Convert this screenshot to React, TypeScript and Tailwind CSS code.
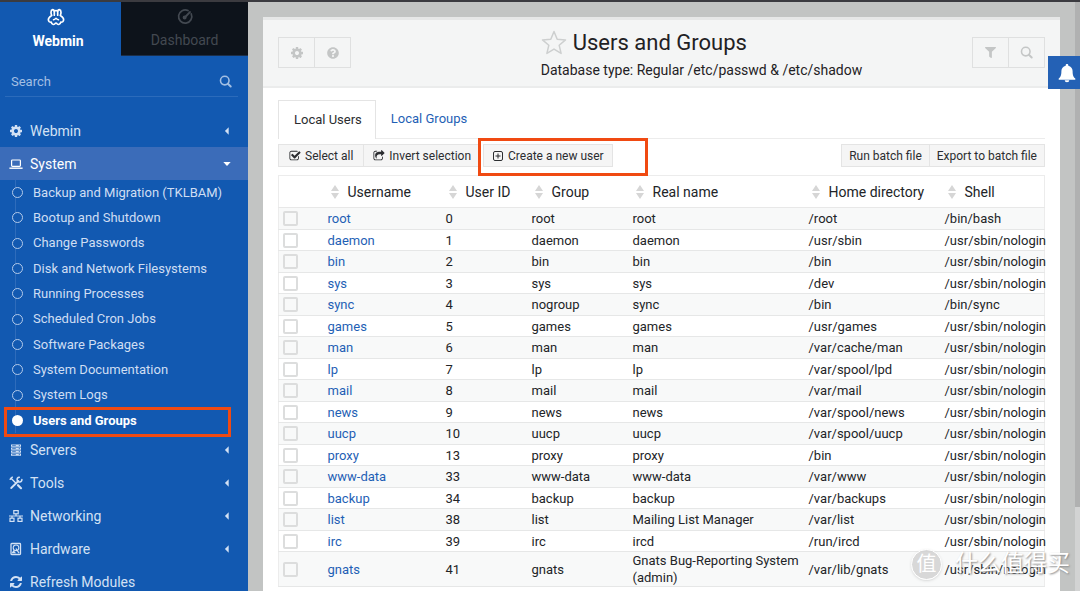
import React, { useState } from 'react';
import { FaFilter, FaQuestionCircle } from 'react-icons/fa';

type IconProps = { className?: string };

const modules = [
  'Backup and Migration (TKLBAM)',
  'Bootup and Shutdown',
  'Change Passwords',
  'Disk and Network Filesystems',
  'Running Processes',
  'Scheduled Cron Jobs',
  'Software Packages',
  'System Documentation',
  'System Logs',
  'Users and Groups',
];

const columns = ['Username', 'User ID', 'Group', 'Real name', 'Home directory', 'Shell'];

const users = [
  { name: 'root', id: 0, group: 'root', real: 'root', home: '/root', shell: '/bin/bash' },
  { name: 'daemon', id: 1, group: 'daemon', real: 'daemon', home: '/usr/sbin', shell: '/usr/sbin/nologin' },
  { name: 'bin', id: 2, group: 'bin', real: 'bin', home: '/bin', shell: '/usr/sbin/nologin' },
  { name: 'sys', id: 3, group: 'sys', real: 'sys', home: '/dev', shell: '/usr/sbin/nologin' },
  { name: 'sync', id: 4, group: 'nogroup', real: 'sync', home: '/bin', shell: '/bin/sync' },
  { name: 'games', id: 5, group: 'games', real: 'games', home: '/usr/games', shell: '/usr/sbin/nologin' },
  { name: 'man', id: 6, group: 'man', real: 'man', home: '/var/cache/man', shell: '/usr/sbin/nologin' },
  { name: 'lp', id: 7, group: 'lp', real: 'lp', home: '/var/spool/lpd', shell: '/usr/sbin/nologin' },
  { name: 'mail', id: 8, group: 'mail', real: 'mail', home: '/var/mail', shell: '/usr/sbin/nologin' },
  { name: 'news', id: 9, group: 'news', real: 'news', home: '/var/spool/news', shell: '/usr/sbin/nologin' },
  { name: 'uucp', id: 10, group: 'uucp', real: 'uucp', home: '/var/spool/uucp', shell: '/usr/sbin/nologin' },
  { name: 'proxy', id: 13, group: 'proxy', real: 'proxy', home: '/bin', shell: '/usr/sbin/nologin' },
  { name: 'www-data', id: 33, group: 'www-data', real: 'www-data', home: '/var/www', shell: '/usr/sbin/nologin' },
  { name: 'backup', id: 34, group: 'backup', real: 'backup', home: '/var/backups', shell: '/usr/sbin/nologin' },
  { name: 'list', id: 38, group: 'list', real: 'Mailing List Manager', home: '/var/list', shell: '/usr/sbin/nologin' },
  { name: 'irc', id: 39, group: 'irc', real: 'ircd', home: '/run/ircd', shell: '/usr/sbin/nologin' },
  { name: 'gnats', id: 41, group: 'gnats', real: 'Gnats Bug-Reporting System (admin)', home: '/var/lib/gnats', shell: '/usr/sbin/nologin' },
];

function CogIcon({ className }: IconProps) {
  return (
    <svg viewBox="0 0 1792 1792" fill="currentColor" className={className}>
      <path d="M1152 896q0-106-75-181t-181-75-181 75-75 181 75 181 181 75 181-75 75-181zm512-109v222q0 12-8 23t-20 13l-185 28q-19 54-39 91 35 50 107 138 10 12 10 25t-9 23q-27 37-99 108t-94 71q-12 0-26-9l-138-108q-44 23-91 38-16 136-29 186-7 28-36 28h-222q-14 0-24.5-8.5t-11.5-21.5l-28-184q-49-16-90-37l-141 107q-10 9-25 9-14 0-25-11-126-114-165-168-7-10-7-23 0-12 8-23 15-21 51-66.5t54-70.5q-27-50-41-99l-183-27q-13-2-21-12.5t-8-23.5v-222q0-12 8-23t19-13l186-28q14-46 39-92-40-57-107-138-10-12-10-24 0-10 9-23 26-36 98.5-107.5t94.5-71.5q13 0 26 10l138 107q44-23 91-38 16-136 29-186 7-28 36-28h222q14 0 24.5 8.5t11.5 21.5l28 184q49 16 90 37l142-107q9-9 24-9 13 0 25 10 129 119 165 170 7 8 7 22 0 12-8 23-15 21-51 66.5t-54 70.5q26 50 41 98l183 28q13 2 21 12.5t8 23.5z" />
    </svg>
  );
}

function RefreshIcon({ className }: IconProps) {
  return (
    <svg viewBox="0 0 1792 1792" fill="currentColor" className={className}>
      <path d="M1639 1056q0 5-1 7-64 268-268 434.5t-478 166.5q-146 0-282.5-55t-243.5-157l-129 129q-19 19-45 19t-45-19-19-45v-448q0-26 19-45t45-19h448q26 0 45 19t19 45-19 45l-137 137q71 66 161 102t187 36q134 0 250-65t186-179q11-17 53-117 8-23 30-23h192q13 0 22.5 9.5t9.5 22.5zm25-800v448q0 26-19 45t-45 19h-448q-26 0-45-19t-19-45 19-45l138-138q-148-137-349-137-134 0-250 65t-186 179q-11 17-53 117-8 23-30 23h-199q-13 0-22.5-9.5t-9.5-22.5v-7q65-268 270-434.5t480-166.5q146 0 284 55.5t245 156.5l130-129q19-19 45-19t45 19 19 45z" />
    </svg>
  );
}

function CheckSquareIcon({ className }: IconProps) {
  return (
    <svg viewBox="0 0 1792 1792" fill="currentColor" className={className}>
      <path d="M1472 930v318q0 119-84.5 203.5t-203.5 84.5h-832q-119 0-203.5-84.5t-84.5-203.5v-832q0-119 84.5-203.5t203.5-84.5h832q63 0 117 25 15 7 18 23 3 17-9 29l-49 49q-10 10-23 10-3 0-9-2-23-6-45-6h-832q-66 0-113 47t-47 113v832q0 66 47 113t113 47h832q66 0 113-47t47-113v-254q0-13 9-22l64-64q10-10 23-10 6 0 12 3 20 8 20 29zm231-489l-814 814q-24 24-57 24t-57-24l-430-430q-24-24-24-57t24-57l110-110q24-24 57-24t57 24l263 263 647-647q24-24 57-24t57 24l110 110q24 24 24 57t-24 57z" />
    </svg>
  );
}

function InvertIcon({ className }: IconProps) {
  return (
    <svg viewBox="0 0 1792 1792" fill="currentColor" className={className}>
      <path d="M1472 989v259q0 119-84.5 203.5t-203.5 84.5h-832q-119 0-203.5-84.5t-84.5-203.5v-832q0-119 84.5-203.5t203.5-84.5h255q13 0 22.5 9.5t9.5 22.5q0 27-26 32-77 26-133 60-10 4-16 4h-112q-66 0-113 47t-47 113v832q0 66 47 113t113 47h832q66 0 113-47t47-113v-214q0-19 18-29 28-13 54-37 16-16 35-8 21 9 21 31zm237-496l-384 384q-18 19-45 19-12 0-25-5-39-17-39-59v-192h-160q-323 0-438 131-119 137-74 473 3 23-20 34-8 2-12 2-16 0-26-13-10-14-21-31t-39.5-68.5-49.5-99.5-38.5-114-17.5-122q0-49 3.5-91t14-90 28-88 47-81.5 68.5-74 94.5-61.5 124.5-48.5 159.5-30.5 196.5-11h160v-192q0-42 39-59 13-5 25-5 26 0 45 19l384 384q19 19 19 45t-19 45z" />
    </svg>
  );
}

function PlusSquareIcon({ className }: IconProps) {
  return (
    <svg viewBox="0 0 12 12" fill="none" stroke="currentColor" className={className}>
      <rect x="1.5" y="1.5" width="9" height="9" rx="1.5" />
      <path d="M6 3.5v5M3.5 6h5" />
    </svg>
  );
}

function SearchIcon({ className }: IconProps) {
  return (
    <svg viewBox="0 0 14 14" fill="none" stroke="currentColor" strokeWidth="1.7" className={className}>
      <circle cx="6.2" cy="6" r="4.6" />
      <path d="M9.6 9.4l3 3" strokeWidth="2.1" strokeLinecap="round" />
    </svg>
  );
}

function LaptopIcon({ className }: IconProps) {
  return (
    <svg viewBox="0 0 14 14" fill="none" stroke="currentColor" className={className}>
      <rect x="2.6" y="3" width="8.8" height="6.4" rx="0.8" strokeWidth="1.2" />
      <path d="M0.4 11.2h13.2" strokeWidth="1.4" />
    </svg>
  );
}

function ServersIcon({ className }: IconProps) {
  return (
    <svg viewBox="0 0 14 14" fill="none" className={className}>
      <path d="M2 2.6h10M2 5.6h10M2 8.6h10M2 11.6h10" stroke="currentColor" strokeWidth="2.2" />
      <path d="M3.2 2.6h3.6M3.2 5.6h3.6M3.2 8.6h3.6M3.2 11.6h3.6" stroke="#1259b1" strokeWidth="0.7" />
      <path d="M9.8 2.6h1M9.8 5.6h1M9.8 8.6h1M9.8 11.6h1" stroke="#1259b1" strokeWidth="0.9" />
    </svg>
  );
}

function ToolsIcon({ className }: IconProps) {
  return (
    <svg viewBox="0 0 14 14" fill="none" stroke="currentColor" strokeLinecap="round" className={className}>
      <path d="M2.2 12L9.4 5" strokeWidth="1.8" />
      <path d="M12.900 3.500a2.400 2.400 0 1 1-2.600-2.300" strokeWidth="1.500" />
      <path d="M2 2.200l5 5" strokeWidth="1.300" />
      <path d="M1.200 3.200l2-2" strokeWidth="1.600" />
      <path d="M9 9.200l3 3" strokeWidth="2.200" />
    </svg>
  );
}

function NetworkIcon({ className }: IconProps) {
  return (
    <svg viewBox="0 0 14 14" fill="none" stroke="currentColor" strokeWidth="1.2" className={className}>
      <rect x="4.8" y="1.6" width="4.4" height="3.2" />
      <rect x="1" y="9.2" width="4" height="3.2" />
      <rect x="9" y="9.2" width="4" height="3.2" />
      <path d="M7 4.8v2.2M0 7h14M3 7v2M11 7v2" />
    </svg>
  );
}

function DiskIcon({ className }: IconProps) {
  return (
    <svg viewBox="0 0 14 14" fill="none" stroke="currentColor" className={className}>
      <rect x="2" y="1.500" width="9.500" height="11" rx="0.800" strokeWidth="1.300" />
      <circle cx="7" cy="5.800" r="2.800" strokeWidth="1.100" />
      <path d="M2.500 11.300h4.500L4.600 8z" fill="currentColor" stroke="none" />
      <path d="M7 6.500l3 4.600" strokeWidth="1.300" />
    </svg>
  );
}

function BellIcon({ className }: IconProps) {
  return (
    <svg viewBox="0 0 18 20" fill="currentColor" className={className}>
      <path d="M9 1c-.8 0-1.3.5-1.3 1.2v.5C5 3.3 3.4 5.500 3.400 8c0 4.500-1 6.200-2.700 7.500v1.200h16.600v-1.200c-1.700-1.300-2.700-3-2.700-7.500 0-2.500-1.600-4.700-4.300-5.300v-.5C10.300 1.500 9.800 1 9 1zM6.700 17.200a2.300 2.100 0 0 0 4.600 0z" />
    </svg>
  );
}

function StarIcon({ className }: IconProps) {
  return (
    <svg viewBox="0 0 26 26" fill="none" stroke="currentColor" strokeWidth="1.5" strokeLinejoin="round" className={className}>
      <path d="M13 1.500l3.200 7.700 8.300.7-6.300 5.400 1.900 8.100L13 19.100l-7.100 4.300 1.900-8.100L1.500 9.900l8.300-.7z" />
    </svg>
  );
}

function WebminLogo({ className }: IconProps) {
  return (
    <svg viewBox="0 0 18 18" fill="none" stroke="currentColor" strokeWidth="1.7" strokeLinejoin="round" strokeLinecap="round" className={className}>
      <path d="M7.300 7.200V3.400Q7 1.700 5.700 1.700 4 2 4 4.200q0 2 .7 3.200Q2.500 8.600 1.700 10.400q-.8 2 .5 3.200 1 .8 2 .6.300 2 2 2.300 1 0 1.700-.8.500-.6 1.100-.6t1.100.6q.7.800 1.700.8 1.700-.3 2-2.300 1 .2 2-.6 1.300-1.200.5-3.200-.8-1.800-3-3Q14 6.200 14 4.200q0-2.200-1.700-2.500-1.300 0-1.600 1.700v3.800" />
      <path d="M7.300 3.400Q9 1.400 10.700 3.400M6.500 11.800Q7.500 11.600 9 10.200q1.500 1.400 2.500 1.600" strokeWidth="1.500" />
    </svg>
  );
}

function GaugeIcon({ className }: IconProps) {
  return (
    <svg viewBox="0 0 18 18" fill="none" stroke="currentColor" strokeWidth="1.800" strokeLinecap="round" className={className}>
      <path d="M15.600 6.200A7 7 0 1 1 12.200 2.700" />
      <path d="M9 9.800L14.200 4.300" strokeWidth="2" />
      <circle cx="8.600" cy="10" r="1.200" fill="currentColor" />
    </svg>
  );
}

function SortIcon() {
  return (
    <svg viewBox="0 0 8 14" className="h-[14px] w-2 shrink-0 fill-[#d6d6d6]">
      <path d="M4 0l4 6H0zM4 14l4-6H0z" />
    </svg>
  );
}

function Caret({ open }: { open?: boolean }) {
  return (
    <svg viewBox="0 0 8 8" className="h-2 w-2 fill-current">
      {open ? <path d="M0.300 2h7.400L4 6z" /> : <path d="M5.700 0.300v7.400L1.900 4z" />}
    </svg>
  );
}

function MenuItem({ icon, label, open, plain }: { icon: React.ReactNode; label: string; open?: boolean; plain?: boolean }) {
  return (
    <button
      type="button"
      className={
        open
          ? 'flex h-[33px] w-full shrink-0 items-center gap-[7px] bg-[#3b6cb9] pr-[17px] pl-[9px] text-left text-sm text-white'
          : 'flex h-[33px] w-full shrink-0 items-center gap-[7px] pr-[17px] pl-[9px] text-left text-sm text-[#d3e1f4]'
      }
    >
      {icon}
      <span className="flex-1">{label}</span>
      {!plain && <Caret open={open} />}
    </button>
  );
}

function Sidebar() {
  return (
    <aside className="flex w-[248px] shrink-0 flex-col bg-[#1259b1]">
      <div className="flex h-[54px] shrink-0">
        <button type="button" className="flex w-[121px] flex-col items-center pt-[6px] pr-[9px] text-sm font-bold text-white">
          <WebminLogo className="h-[18px] w-[18px]" />
          <span className="pl-1 leading-[30px]">Webmin</span>
        </button>
        <button type="button" className="flex flex-1 flex-col items-center border-b border-[#1c2f4a] bg-[#0d131b] pt-[6px] text-sm text-[#434951]">
          <GaugeIcon className="h-[18px] w-[18px]" />
          <span className="leading-[30px]">Dashboard</span>
        </button>
      </div>

      <div className="mr-[10px] mb-[17px] ml-[5px] mt-[11px] flex h-[30px] shrink-0 items-center border-b border-[#2b6bbb] px-[6px] text-[#a3bfe3]">
        <input
          type="search"
          aria-label="Search"
          placeholder="Search"
          className="min-w-0 flex-1 bg-transparent text-[13px] outline-none placeholder:text-[#a3bfe3]"
        />
        <SearchIcon className="h-[13px] w-[13px]" />
      </div>

      <nav className="flex flex-col">
        <MenuItem icon={<CogIcon className="h-[14px] w-[14px]" />} label="Webmin" />
        <MenuItem icon={<LaptopIcon className="h-[14px] w-[14px]" />} label="System" open />
        <ul className="relative grid h-[253px] shrink-0 auto-rows-fr text-[13px] text-[#cfdef3]">
          <li aria-hidden="true" className="absolute top-0 bottom-0 left-[15px] w-px bg-[#2f6cbb]" />
          {modules.map((name) => {
            const active = name === 'Users and Groups';
            return (
              <li key={name} className="relative flex items-center pl-3">
                <a href="#" className={active ? 'flex items-center gap-[10px] font-bold text-white' : 'flex items-center gap-[10px]'}>
                  <span
                    className={
                      active
                        ? 'h-[11px] w-[11px] rounded-full bg-white'
                        : 'h-[11px] w-[11px] rounded-full border border-[#b4cbea] bg-[#1259b1]'
                    }
                  />
                  {name}
                </a>
                {active && <span className="absolute -top-px right-[17px] -bottom-1 left-1 border-3 border-[#f04a12]" />}
              </li>
            );
          })}
        </ul>
        <MenuItem icon={<ServersIcon className="h-[14px] w-[14px]" />} label="Servers" />
        <MenuItem icon={<ToolsIcon className="h-[14px] w-[14px]" />} label="Tools" />
        <MenuItem icon={<NetworkIcon className="h-[14px] w-[14px]" />} label="Networking" />
        <MenuItem icon={<DiskIcon className="h-[14px] w-[14px]" />} label="Hardware" />
        <MenuItem icon={<RefreshIcon className="h-[14px] w-[14px]" />} label="Refresh Modules" plain />
      </nav>
    </aside>
  );
}

function PanelHeader() {
  return (
    <header className="flex h-[71px] items-start justify-between border-t-3 border-b-2 border-t-[#e6e7e7] border-b-[#ebecec] bg-[#f4f5f5] px-[15px] text-[#c4c6c6]">
      <div className="mt-[17px] flex h-[31px] border border-[#dfe0e0]">
        <button type="button" aria-label="Module config" className="flex w-9 items-center justify-center border-r border-[#dfe0e0]">
          <CogIcon className="h-[14px] w-[14px]" />
        </button>
        <button type="button" aria-label="Help" className="flex w-[35px] items-center justify-center">
          <FaQuestionCircle className="h-3 w-3" />
        </button>
      </div>
      <div className="mt-2 ml-20 flex flex-col text-[#1f2124]">
        <div className="flex items-center gap-[6px]">
          <StarIcon className="h-[26px] w-[26px] text-[#cdcfcf]" />
          <h1 className="text-[22px] leading-[30px]">Users and Groups</h1>
        </div>
        <p className="text-sm leading-6">Database type: Regular /etc/passwd &amp; /etc/shadow</p>
      </div>
      <div className="mt-[17px] flex h-[31px] border border-[#dfe0e0]">
        <button type="button" aria-label="Filter" className="flex w-9 items-center justify-center border-r border-[#dfe0e0]">
          <FaFilter className="h-[11px] w-[11px]" />
        </button>
        <button type="button" aria-label="Search users" className="flex w-[35px] items-center justify-center">
          <SearchIcon className="h-[13px] w-[13px]" />
        </button>
      </div>
    </header>
  );
}

function Toolbar() {
  return (
    <div className="mt-[5px] flex h-[23px] items-stretch justify-between text-xs text-[#2b2d30]">
      <div className="flex">
        <button type="button" className="flex items-center gap-1 border border-[#e4e4e4] bg-[#f5f5f5] px-[10px]">
          <CheckSquareIcon className="h-3 w-3" />
          Select all
        </button>
        <button type="button" className="flex items-center gap-1 border-y border-[#e4e4e4] bg-[#f5f5f5] px-[9px]">
          <InvertIcon className="h-3 w-3" />
          Invert selection
        </button>
        <div className="relative ml-[3px] flex">
          <button type="button" className="flex items-center gap-1 border border-[#e4e4e4] bg-[#f5f5f5] px-2">
            <PlusSquareIcon className="h-3 w-3" />
            Create a new user
          </button>
          <span className="pointer-events-none absolute -top-[6px] -right-[35px] -bottom-[9px] -left-[5px] border-3 border-[#f04a12]" />
        </div>
      </div>
      <div className="flex">
        <button type="button" className="border border-[#e4e4e4] bg-[#f5f5f5] px-[7px]">Run batch file</button>
        <button type="button" className="border border-l-0 border-[#e4e4e4] bg-[#f5f5f5] px-[7px]">Export to batch file</button>
      </div>
    </div>
  );
}

function UsersTable() {
  const [selected, setSelected] = useState<string[]>([]);

  const toggle = (name: string) => {
    setSelected(selected.includes(name) ? selected.filter((n) => n !== name) : [...selected, name]);
  };

  return (
    <table className="mt-2 w-full table-fixed border-collapse border border-[#ececec] text-left text-[13px] leading-[17px] text-[#222427]">
      <colgroup>
        <col className="w-[45px]" />
        <col className="w-[118px]" />
        <col className="w-[86px]" />
        <col className="w-[101px]" />
        <col className="w-[176px]" />
        <col className="w-[136px]" />
        <col />
      </colgroup>
      <thead>
        <tr className="h-8 border-b border-[#e8e8e8]">
          <th aria-label="Select" />
          {columns.map((title) => (
            <th key={title} className="pl-[7px] text-sm font-normal">
              <span className="flex items-center gap-[9px] whitespace-nowrap">
                <SortIcon />
                {title}
              </span>
            </th>
          ))}
        </tr>
      </thead>
      <tbody>
        {users.map((user) => (
          <tr
            key={user.name}
            className="h-[21px] border-b border-[#e6e7e7] odd:h-[22px] odd:bg-[#f8f9f9] last:h-[37px]"
          >
            <td className="pl-1">
              <input
                type="checkbox"
                aria-label={user.name}
                checked={selected.includes(user.name)}
                onChange={() => toggle(user.name)}
                className="block h-[15px] w-[15px] appearance-none rounded-xs border-2 border-[#dcdddd] checked:bg-[#1259b1]"
              />
            </td>
            <td className="pl-1">
              <a href="#" className="text-[#1f5fb5]">{user.name}</a>
            </td>
            <td className="pl-1">{user.id}</td>
            <td className="pl-1">{user.group}</td>
            <td className="pl-1">{user.real}</td>
            <td className="pl-1">{user.home}</td>
            <td className="pl-1">{user.shell}</td>
          </tr>
        ))}
      </tbody>
    </table>
  );
}

export default function App() {
  return (
    <div className="relative flex h-screen overflow-hidden border-t-2 border-[#3b3b40] bg-[#c2c4c3] font-['Roboto','Noto_Sans_CJK_SC',sans-serif]">
      <Sidebar />

      <main className="flex min-w-0 flex-1 flex-col px-[15px] pt-[15px]">
        <section className="flex-1 bg-white">
          <PanelHeader />
          <div className="px-[15px] pt-[12px]">
            <div className="flex h-[39px] border-b border-[#ececec] text-[13px]">
              <button type="button" className="-mb-px border border-b-0 border-[#e4e4e4] bg-white pr-[13px] pl-[15px] text-[#2b2d30]">
                Local Users
              </button>
              <button type="button" className="px-[15px] text-[#1f5fb5]">Local Groups</button>
            </div>
            <Toolbar />
            <UsersTable />
          </div>
        </section>
      </main>

      <div className="w-[5px] shrink-0 bg-[#d2d3d3]">
        <div className="h-6/7 bg-[#b0b1b1]" />
      </div>

      <button type="button" aria-label="Notifications" className="absolute top-[54px] right-0 flex h-[33px] w-8 items-center justify-center bg-[#2461b5] pl-[5px] text-white">
        <BellIcon className="h-5 w-[18px]" />
      </button>

      {/* watermark */}
      <div className="pointer-events-none absolute right-[10px] bottom-[11px] flex items-center gap-[13px] text-white">
        <span className="flex h-[31px] w-[31px] items-center justify-center rounded-full border border-white bg-[#cfcfcf]/80 text-xl shadow">值</span>
        <span className="text-[23px] leading-8 [text-shadow:1px_1px_2px_#888888]">什么值得买</span>
      </div>
    </div>
  );
}
